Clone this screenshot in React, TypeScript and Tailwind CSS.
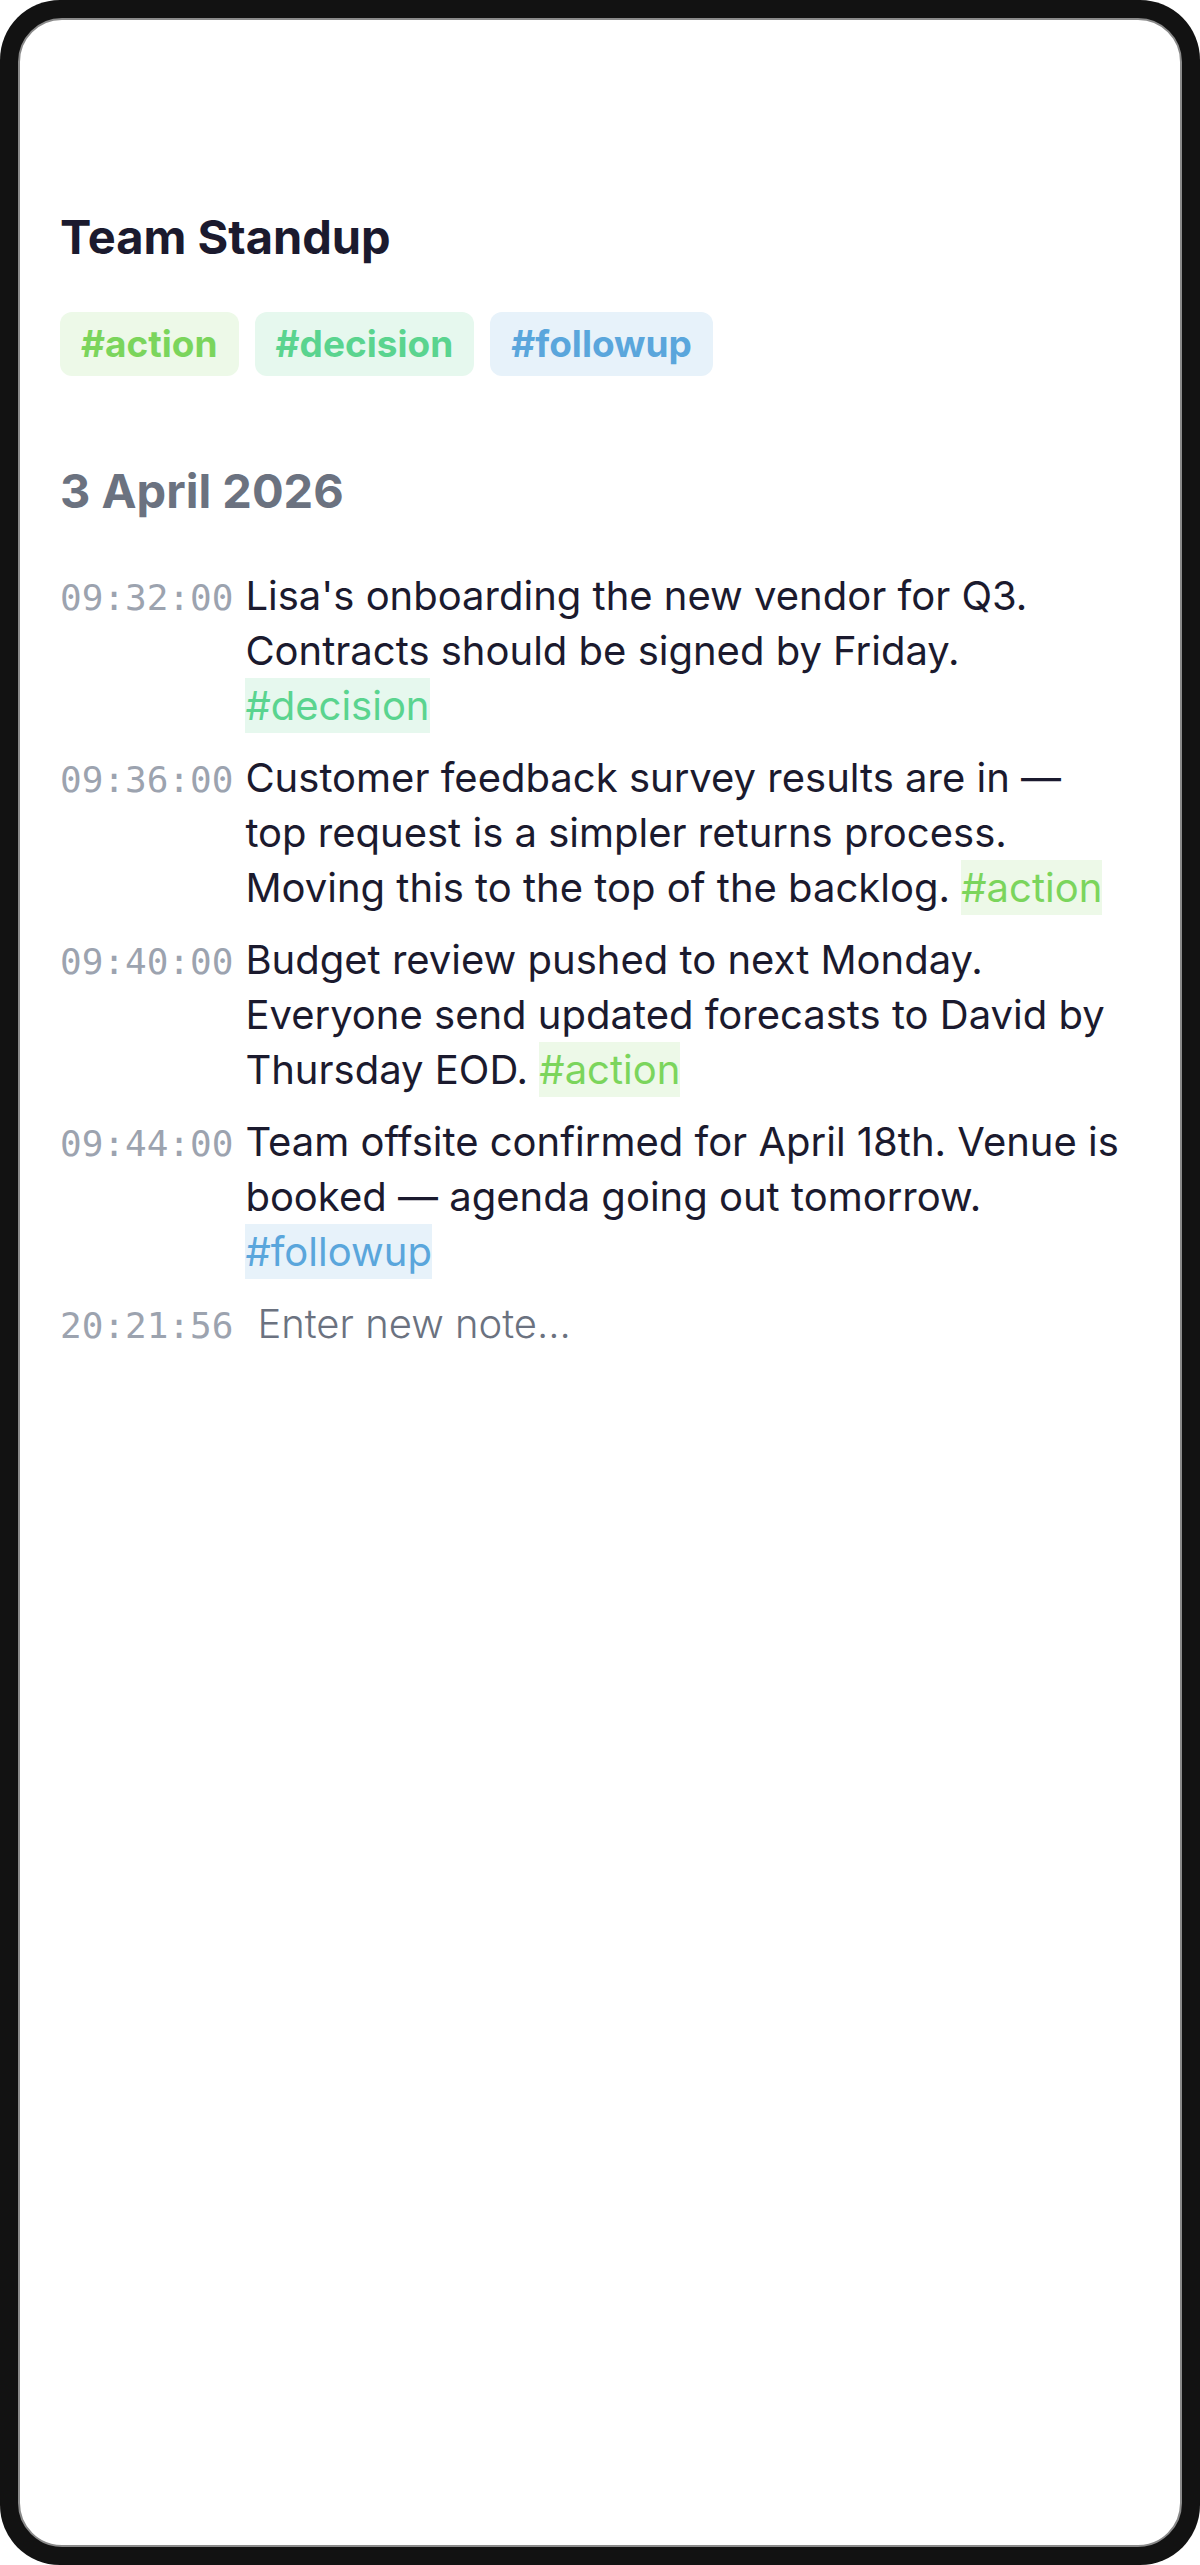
import { useState } from "react";

type Tag = "action" | "decision" | "followup";

const tagChip: Record<Tag, string> = {
  action: "bg-[#edf9e8] text-[#7bd55c]",
  decision: "bg-[#e6f8ee] text-[#5ad48f]",
  followup: "bg-[#e7f2fa] text-[#5aa6dc]",
};

const notes: { time: string; text: string; tag: Tag }[] = [
  {
    time: "09:32:00",
    text: "Lisa's onboarding the new vendor for Q3. Contracts should be signed by Friday.",
    tag: "decision",
  },
  {
    time: "09:36:00",
    text: "Customer feedback survey results are in — top request is a simpler returns process. Moving this to the top of the backlog.",
    tag: "action",
  },
  {
    time: "09:40:00",
    text: "Budget review pushed to next Monday. Everyone send updated forecasts to David by Thursday EOD.",
    tag: "action",
  },
  {
    time: "09:44:00",
    text: "Team offsite confirmed for April 18th. Venue is booked — agenda going out tomorrow.",
    tag: "followup",
  },
];

export default function App() {
  const [draft, setDraft] = useState("");

  return (
    <div className="w-[1200px] h-[2565px] bg-[#121212] rounded-[60px] p-[18px] font-['Inter',sans-serif]">
      <div className="h-full bg-white rounded-[44px] border-2 border-[#8a8a8a] px-[40px] pt-[188px]">
        <h1 className="text-[47px] leading-[57px] font-bold text-[#1b1a2e]">Team Standup</h1>

        <div className="flex gap-4 mt-[47px]">
          {(["action", "decision", "followup"] as Tag[]).map((t) => (
            <span
              key={t}
              className={`px-[21px] py-[4px] rounded-xl text-[37px] leading-[56px] font-bold ${tagChip[t]}`}
            >
              #{t}
            </span>
          ))}
        </div>

        <h2 className="mt-[86px] text-[47px] leading-[57px] font-bold text-[#6b7280]">3 April 2026</h2>

        <div className="mt-[49px] flex flex-col gap-[17px] text-[40px] leading-[55px]">
          {notes.map((n) => (
            <div key={n.time} className="flex items-baseline gap-3">
              <span className="shrink-0 text-[36px] font-['DejaVu_Sans_Mono',monospace] text-[#9ca3af]">
                {n.time}
              </span>
              <p className="max-w-[884px] text-[#1b1a2e]">
                {n.text}{" "}
                <span className={`inline-block ${tagChip[n.tag]}`}>#{n.tag}</span>
              </p>
            </div>
          ))}
          <div className="flex items-baseline gap-3">
            <span className="shrink-0 text-[36px] font-['DejaVu_Sans_Mono',monospace] text-[#9ca3af]">
              20:21:56
            </span>
            <input
              value={draft}
              onChange={(e) => setDraft(e.target.value)}
              placeholder="Enter new note..."
              className="flex-1 px-3 font-light text-[#1b1a2e] placeholder:text-[#6b7280] outline-none bg-transparent"
            />
          </div>
        </div>
      </div>
    </div>
  );
}
